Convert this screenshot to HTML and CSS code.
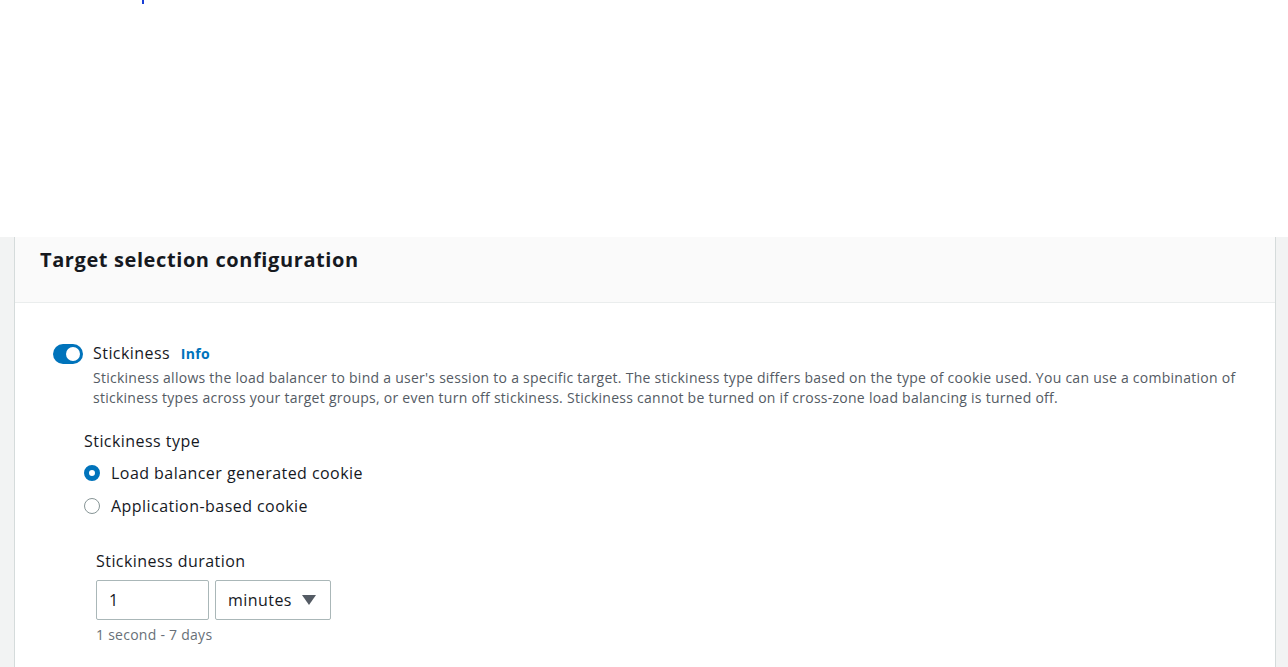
FILE: index.html
```html
<!DOCTYPE html>
<html>
<head>
<meta charset="utf-8">
<link rel="stylesheet" href="styles.css">
</head>
<body>
<div class="top">
  <span class="caret"></span>
</div>
<div class="page">
  <section class="card">
    <header class="card-header">
      <h2 class="title">Target selection configuration</h2>
    </header>
    <div class="card-body">
      <div class="toggle-row">
        <span class="toggle"><span class="knob"></span></span>
        <div class="toggle-text">
          <div class="toggle-label">Stickiness <a class="info">Info</a></div>
          <p class="desc">Stickiness allows the load balancer to bind a user's session to a specific target. The stickiness type differs based on the type of cookie used. You can use a combination of stickiness types across your target groups, or even turn off stickiness. Stickiness cannot be turned on if cross-zone load balancing is turned off.</p>
        </div>
      </div>
      <div class="type-group">
        <div class="field-label">Stickiness type</div>
        <div class="radio-row"><span class="radio checked"></span><span>Load balancer generated cookie</span></div>
        <div class="radio-row"><span class="radio"></span><span>Application-based cookie</span></div>
      </div>
      <div class="duration">
        <div class="field-label">Stickiness duration</div>
        <div class="inputs">
          <div class="input">1</div>
          <div class="select"><span>minutes</span><span class="tri"></span></div>
        </div>
        <div class="hint">1 second - 7 days</div>
      </div>
    </div>
  </section>
</div>
</body>
</html>
```

FILE: styles.css
```css
html, body {
  margin: 0;
  padding: 0;
  background: #ffffff;
  font-family: "Open Sans", "Liberation Sans", sans-serif;
  color: #16191f;
  overflow: hidden;
}
.top {
  height: 237px;
  background: #ffffff;
  position: relative;
}
.caret {
  position: absolute;
  left: 142px;
  top: 0;
  width: 2px;
  height: 4px;
  background: #1a3fd6;
}
.page {
  background: #f2f3f3;
  padding: 0 12px 0 14px;
  height: 430px;
}
.card {
  background: #ffffff;
  border-left: 1px solid #d5dbdb;
  border-right: 1px solid #d5dbdb;
  height: 100%;
}
.card-header {
  background: #fafafa;
  border-bottom: 1px solid #eaeded;
  height: 66px;
  padding: 9px 0 0 25px;
  box-sizing: border-box;
}
.title {
  margin: 0;
  font-size: 20px;
  font-weight: 700;
  line-height: 28px;
  letter-spacing: 0.6px;
  color: #16191f;
}
.card-body {
  padding: 39px 0 0 38px;
}
.toggle-row {
  display: flex;
  gap: 10px;
}
.toggle {
  width: 30px;
  height: 20px;
  border-radius: 10px;
  background: #0073bb;
  margin-top: 2px;
  position: relative;
  flex: none;
}
.knob {
  position: absolute;
  right: 3px;
  top: 3px;
  width: 14px;
  height: 14px;
  border-radius: 50%;
  background: #ffffff;
}
.toggle-label {
  font-size: 16px;
  line-height: 22px;
  letter-spacing: 0.45px;
}
.info {
  font-size: 14px;
  font-weight: 700;
  color: #0073bb;
  margin-left: 6px;
  letter-spacing: 0.3px;
}
.desc {
  margin: 3px 0 0 0;
  font-size: 14px;
  line-height: 20px;
  letter-spacing: 0.26px;
  color: #545b64;
  max-width: 1160px;
}
.type-group {
  margin-left: 31px;
  margin-top: 22px;
}
.field-label {
  font-size: 16px;
  line-height: 22px;
  letter-spacing: 0.45px;
  color: #16191f;
}
.radio-row {
  display: flex;
  align-items: center;
  gap: 11px;
  font-size: 16px;
  line-height: 22px;
  letter-spacing: 0.45px;
  margin-top: 10px;
}
.radio-row + .radio-row {
  margin-top: 11px;
}
.radio {
  width: 16px;
  height: 16px;
  border-radius: 50%;
  border: 1px solid #879596;
  box-sizing: border-box;
  flex: none;
}
.radio.checked {
  border: 5px solid #0073bb;
}
.duration {
  margin-left: 43px;
  margin-top: 33px;
}
.inputs {
  display: flex;
  gap: 6px;
  margin-top: 8px;
}
.input, .select {
  height: 40px;
  box-sizing: border-box;
  border: 1px solid #aab7b8;
  border-radius: 2px;
  font-size: 16px;
  letter-spacing: 0.45px;
  display: flex;
  align-items: center;
  padding-left: 12px;
}
.input {
  width: 113px;
}
.select {
  width: 116px;
  justify-content: space-between;
  padding-right: 14px;
}
.tri {
  width: 0;
  height: 0;
  border-left: 7px solid transparent;
  border-right: 7px solid transparent;
  border-top: 10px solid #545b64;
}
.hint {
  font-size: 14px;
  line-height: 20px;
  letter-spacing: 0.26px;
  color: #687078;
  margin-top: 5px;
}
```
